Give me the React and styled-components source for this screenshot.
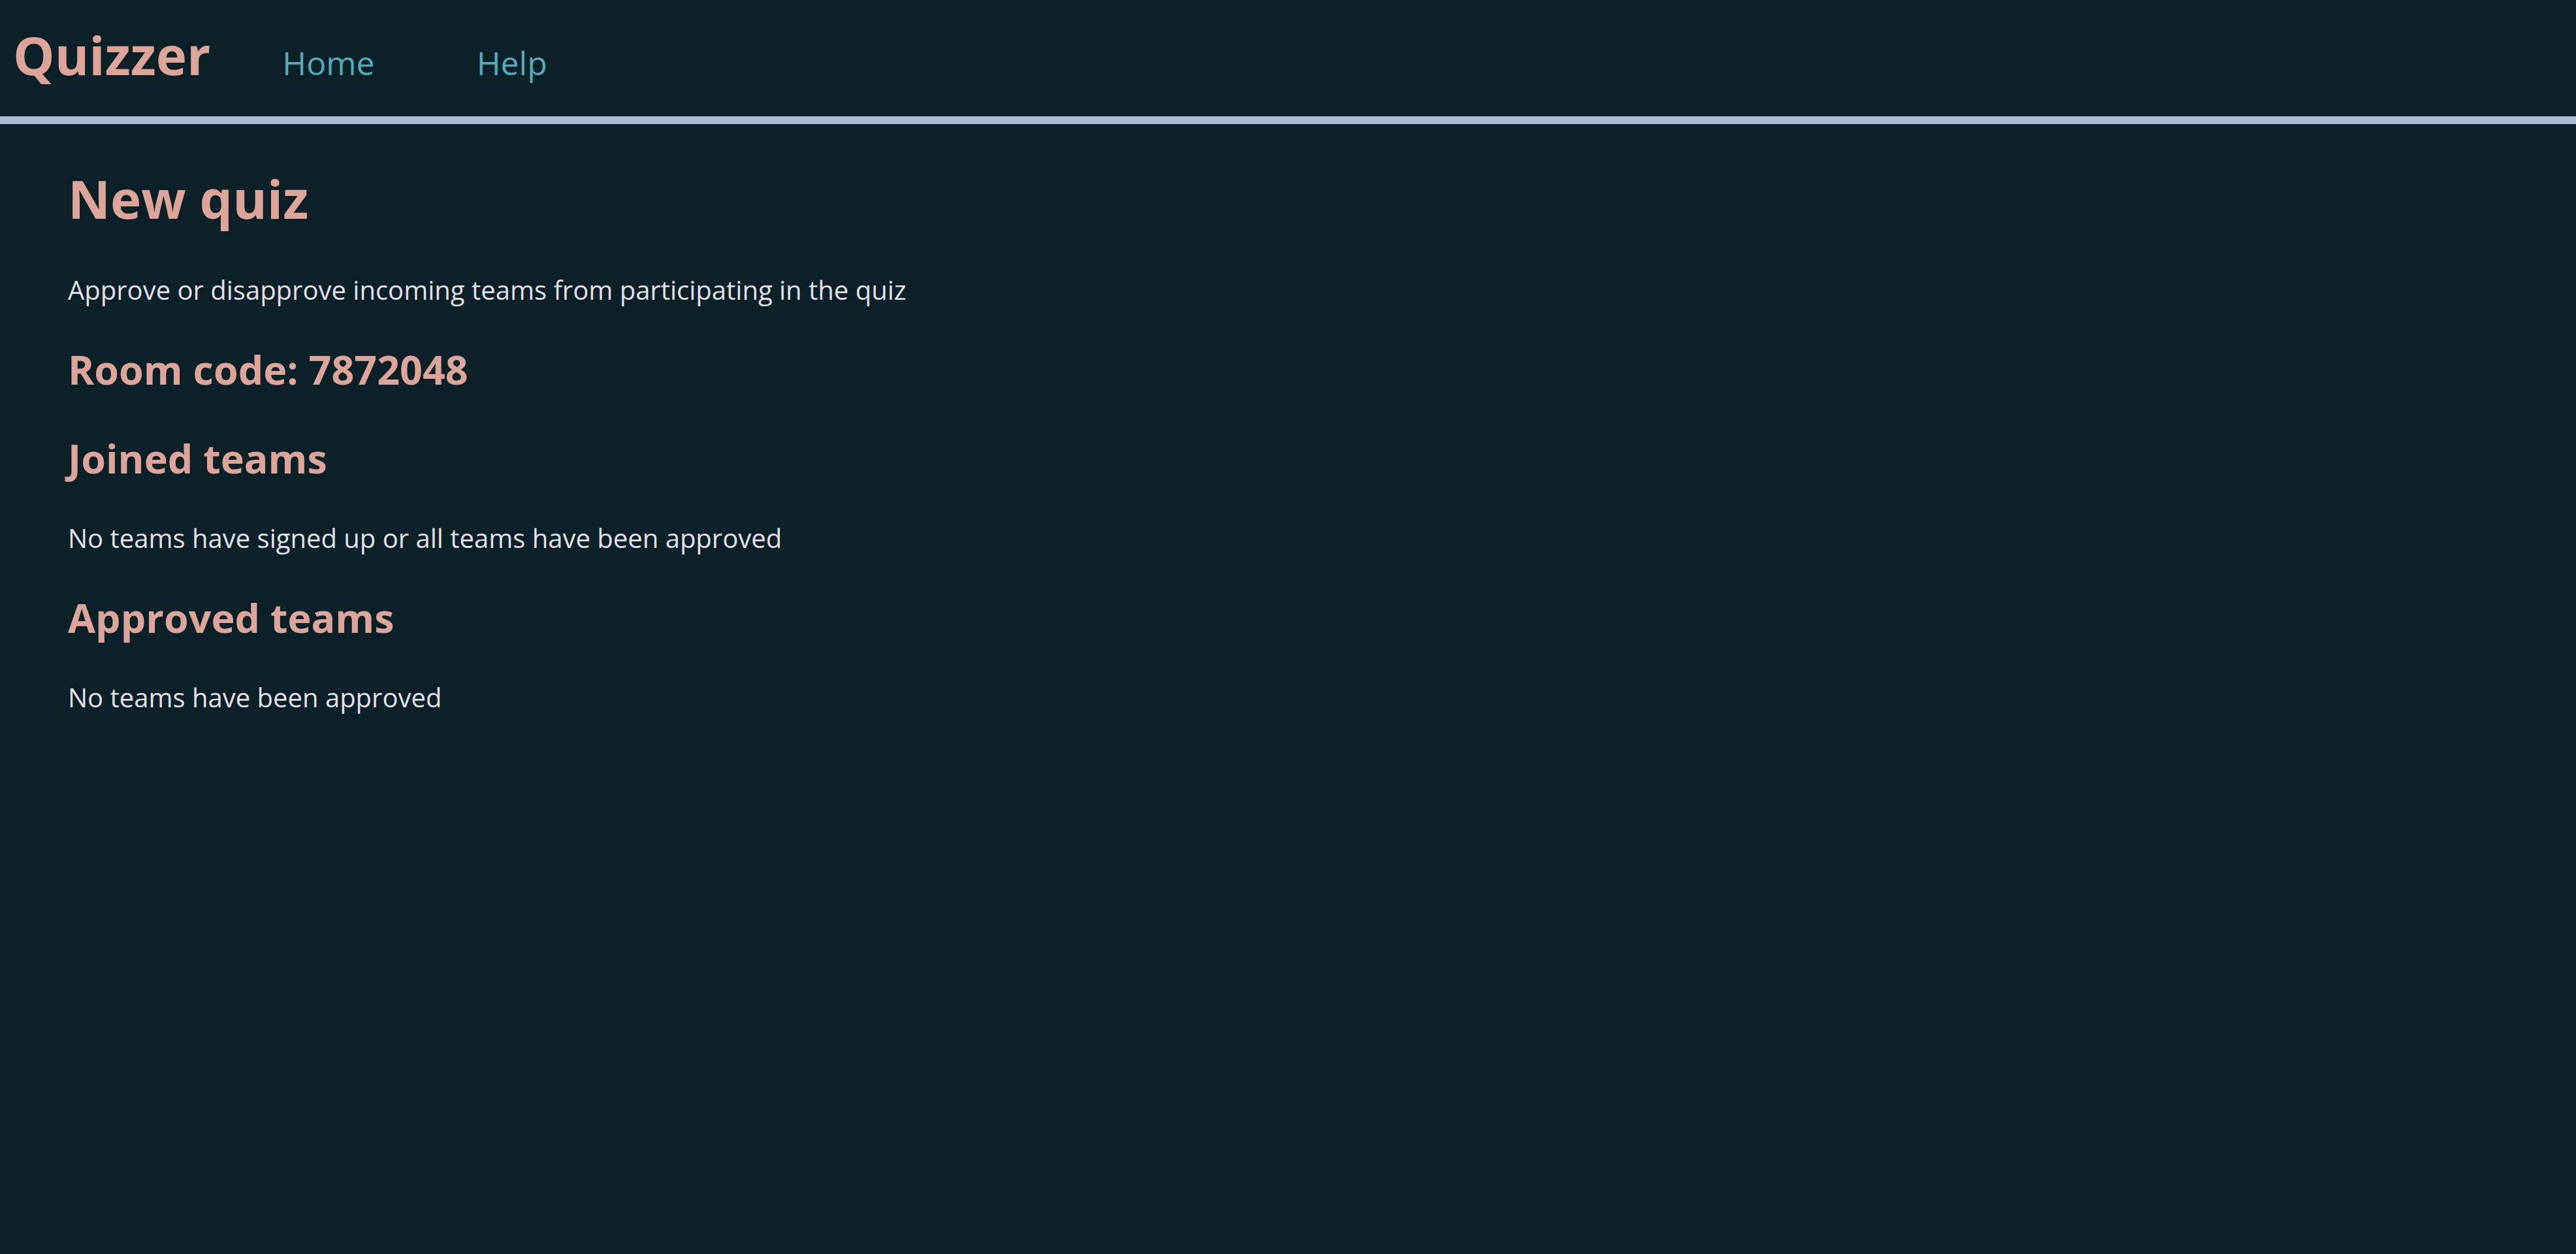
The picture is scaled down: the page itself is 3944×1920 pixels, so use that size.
import React from "react";
import styled, { createGlobalStyle } from "styled-components";

const GlobalStyle = createGlobalStyle`
  html { background: #0c2027; }
  body {
    margin: 0;
    color: #e4e0ea;
    font-family: "Open Sans", "Noto Sans", sans-serif;
    font-size: 40px;
    line-height: 56px;
  }
`;

const Header = styled.header`
  display: flex;
  align-items: baseline;
  gap: 110px;
  padding: 28px 20px 38px;
  border-bottom: 12px solid #aabbd3;
`;

const Logo = styled.span`
  color: #dda59a;
  font-size: 80px;
  font-weight: 700;
  line-height: 112px;
`;

const Nav = styled.nav`
  display: flex;
  gap: 156px;
`;

const NavLink = styled.a`
  color: #56adb9;
  font-size: 50px;
  text-decoration: none;
`;

const Main = styled.main`
  padding: 58px 104px;
`;

const Title = styled.h1`
  margin: 0 0 56px;
  color: #dda59a;
  font-size: 80px;
  line-height: 112px;
`;

const Heading = styled.h2`
  margin: 52px 0;
  color: #dda59a;
  font-size: 61px;
  line-height: 84px;
`;

const Text = styled.p`
  margin: 0;
`;

export default function App() {
  return (
    <>
      <GlobalStyle />
      <Header>
        <Logo>Quizzer</Logo>
        <Nav>
          <NavLink href="#home">Home</NavLink>
          <NavLink href="#help">Help</NavLink>
        </Nav>
      </Header>
      <Main>
        <Title>New quiz</Title>
        <Text>Approve or disapprove incoming teams from participating in the quiz</Text>
        <Heading>Room code: 7872048</Heading>
        <Heading>Joined teams</Heading>
        <Text>No teams have signed up or all teams have been approved</Text>
        <Heading>Approved teams</Heading>
        <Text>No teams have been approved</Text>
      </Main>
    </>
  );
}
